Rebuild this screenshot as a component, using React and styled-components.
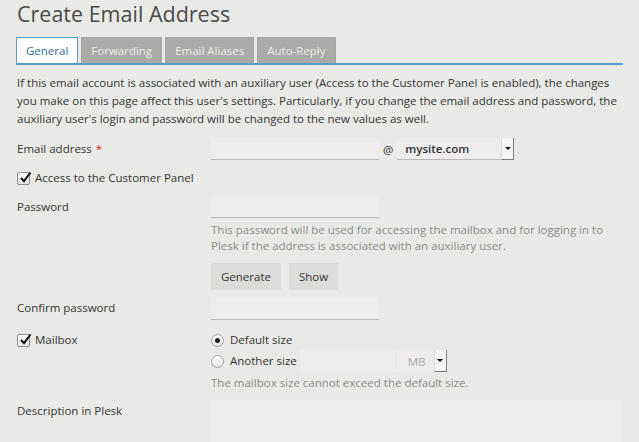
import React from "react";
import styled, { createGlobalStyle } from "styled-components";

const GlobalStyle = createGlobalStyle`
  html, body {
    margin: 0;
    padding: 0;
    background: #e9eae7;
  }
  body {
    font-family: "Open Sans", "Noto Sans", sans-serif;
    font-size: 11.5px;
    color: #333;
    overflow: hidden;
  }
`;

const Page = styled.div`
  width: 607px;
  padding: 0 16px;
  height: 442px;
  overflow: hidden;
`;

const Title = styled.h1`
  margin: 0;
  padding-left: 1px;
  font-size: 21.5px;
  font-weight: 400;
  line-height: 28px;
  color: #4a4a4a;
`;

const TabBar = styled.div`
  display: flex;
  gap: 3px;
  margin-top: 9px;
  border-bottom: 2px solid #5b9dc0;
`;

const Tab = styled.div`
  height: 25px;
  line-height: 25px;
  padding: 0 9px;
  font-size: 11.5px;
  border: 1px solid ${(p) => (p.active ? "#5b9dc0" : "#a6a6a4")};
  border-bottom: none;
  background: ${(p) => (p.active ? "#fff" : "#aaaaa8")};
  color: ${(p) => (p.active ? "#2f6f95" : "#ececea")};
`;

const Intro = styled.p`
  margin: 9px 0 0;
  padding-left: 1px;
  line-height: 18px;
`;

const Row = styled.div`
  display: flex;
  align-items: flex-start;
  margin-top: ${(p) => p.mt || 0}px;
`;

const Label = styled.div`
  width: 194px;
  flex: none;
  padding-left: 1px;
  line-height: ${(p) => p.lh || 22}px;
  display: flex;
  align-items: center;
`;

const Field = styled.div`
  flex: 1;
  display: flex;
  flex-direction: column;
`;

const Inline = styled.div`
  display: flex;
  align-items: center;
  margin-top: ${(p) => p.mt || 0}px;
`;

const Required = styled.span`
  color: #e2231a;
  margin-left: 4px;
`;

const Input = styled.div`
  width: ${(p) => p.w || 168}px;
  height: ${(p) => p.h || 22}px;
  box-sizing: border-box;
  background: #eeeced;
  border-bottom: ${(p) => (p.flat ? "none" : "1px solid #b9b9b9")};
`;

const At = styled.span`
  margin: 0 4px 0 4px;
  color: #333;
`;

const Select = styled.div`
  width: ${(p) => p.w}px;
  height: 22px;
  box-sizing: border-box;
  display: flex;
  align-items: center;
  justify-content: space-between;
  margin-left: ${(p) => (p.muted ? 2 : 0)}px;
  background: #eeeced;
  border-bottom: ${(p) => (p.muted ? "none" : "1px solid #b9b9b9")};
  padding-left: ${(p) => (p.muted ? 11 : 8)}px;
  font-weight: ${(p) => (p.muted ? 400 : 600)};
  color: ${(p) => (p.muted ? "#a9a9a9" : "#333")};
`;

const Arrow = styled.span`
  width: 13px;
  height: 22px;
  box-sizing: border-box;
  display: flex;
  align-items: center;
  justify-content: center;
  background: #f4f4f3;
  border-left: 1px solid #dcdcdc;
  border-right: 1px solid #7c7c7c;
  border-bottom: 1px solid #7c7c7c;
  &::after {
    content: "";
    border-left: 3px solid transparent;
    border-right: 3px solid transparent;
    border-top: 3px solid #111;
  }
`;

const CheckBox = styled.span`
  width: 13px;
  height: 13px;
  box-sizing: border-box;
  border: 1px solid #8f8f8f;
  border-radius: 2px;
  background: linear-gradient(#fafafa, #e4e4e4);
  display: inline-flex;
  align-items: center;
  justify-content: center;
  margin-right: 5px;
  position: relative;
  svg {
    position: absolute;
    left: 1px;
    top: -2px;
  }
`;

const Radio = styled.span`
  width: 13px;
  height: 13px;
  box-sizing: border-box;
  border: 1px solid #a2a2a2;
  border-radius: 50%;
  background: linear-gradient(#fdfdfd, #e6e6e6);
  display: inline-flex;
  align-items: center;
  justify-content: center;
  margin-right: 6px;
  &::after {
    content: "";
    width: 5px;
    height: 5px;
    border-radius: 50%;
    background: ${(p) => (p.checked ? "#222" : "transparent")};
  }
`;

const Option = styled.span`
  line-height: 18px;
  margin-right: 3px;
`;

const Help = styled.div`
  margin-top: ${(p) => p.mt || 0}px;
  line-height: 16px;
  color: #8a8a8a;
`;

const Buttons = styled.div`
  display: flex;
  gap: 8px;
  margin-top: 9px;
`;

const Button = styled.button`
  height: 27px;
  padding: 0 10px;
  border: none;
  background: #dcdcdb;
  color: #333;
  font-family: inherit;
  font-size: 11.5px;
`;

const TextArea = styled.div`
  width: 411px;
  height: 60px;
  background: #eeeced;
`;

const Check = () => (
  <svg width="13" height="13" viewBox="0 0 13 13">
    <path d="M2 7 L5 10.2 L11.5 1.5" fill="none" stroke="#111" strokeWidth="2" />
  </svg>
);

export default function App() {
  return (
    <Page>
      <GlobalStyle />
      <Title>Create Email Address</Title>
      <TabBar>
        <Tab active>General</Tab>
        <Tab>Forwarding</Tab>
        <Tab>Email Aliases</Tab>
        <Tab>Auto-Reply</Tab>
      </TabBar>
      <Intro>
        If this email account is associated with an auxiliary user (Access to
        the Customer Panel is enabled), the changes you make on this page affect
        this user's settings. Particularly, if you change the email address and
        password, the auxiliary user's login and password will be changed to the
        new values as well.
      </Intro>

      <Row mt={10}>
        <Label>
          Email address<Required>*</Required>
        </Label>
        <Inline>
          <Input />
          <At>@</At>
          <Select w={117}>
            mysite.com
            <Arrow />
          </Select>
        </Inline>
      </Row>

      <Row mt={9}>
        <Label lh={18}>
          <CheckBox>
            <Check />
          </CheckBox>
          Access to the Customer Panel
        </Label>
      </Row>

      <Row mt={9}>
        <Label>Password</Label>
        <Field>
          <Input />
          <Help mt={4}>
            This password will be used for accessing the mailbox and for logging
            in to Plesk if the address is associated with an auxiliary user.
          </Help>
          <Buttons>
            <Button>Generate</Button>
            <Button>Show</Button>
          </Buttons>
        </Field>
      </Row>

      <Row mt={7}>
        <Label>Confirm password</Label>
        <Input h={23} />
      </Row>

      <Row mt={11}>
        <Label lh={18}>
          <CheckBox>
            <Check />
          </CheckBox>
          Mailbox
        </Label>
        <Field>
          <Inline>
            <Radio checked />
            <Option>Default size</Option>
          </Inline>
          <Inline mt={1}>
            <Radio />
            <Option>Another size</Option>
            <Input w={95} flat />
            <Select w={50} muted>
              MB
              <Arrow />
            </Select>
          </Inline>
          <Help mt={3}>The mailbox size cannot exceed the default size.</Help>
        </Field>
      </Row>

      <Row mt={9}>
        <Label>Description in Plesk</Label>
        <TextArea />
      </Row>
    </Page>
  );
}
